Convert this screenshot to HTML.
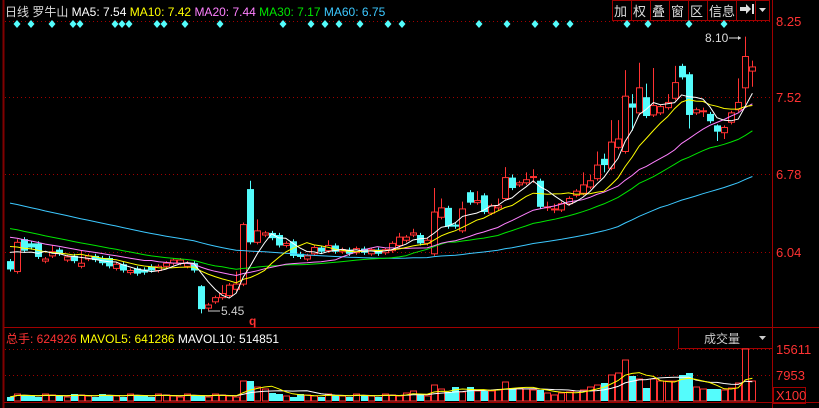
<!DOCTYPE html>
<html><head><meta charset="utf-8">
<style>
html,body{margin:0;padding:0;background:#000;width:819px;height:408px;overflow:hidden}
svg{display:block}
text{font-family:"Liberation Sans","Noto Sans CJK SC",sans-serif}
</style></head><body>
<svg id="s" width="819" height="408" xmlns="http://www.w3.org/2000/svg">
<rect width="819" height="408" fill="#000"/>
<line x1="3.5" y1="0" x2="3.5" y2="408" stroke="#800000" stroke-width="2"/>
<line x1="772.5" y1="0" x2="772.5" y2="408" stroke="#a00000"/>
<g stroke="#a00000" stroke-dasharray="1,3">
<line x1="5" y1="21.5" x2="772" y2="21.5"/>
<line x1="5" y1="97.5" x2="772" y2="97.5"/>
<line x1="5" y1="174.5" x2="772" y2="174.5"/>
<line x1="5" y1="252.5" x2="772" y2="252.5"/>
<line x1="5" y1="349.5" x2="772" y2="349.5"/>
<line x1="5" y1="375.5" x2="772" y2="375.5"/>
</g>
<line x1="4" y1="327.5" x2="819" y2="327.5" stroke="#a00000"/>
<line x1="4" y1="402.5" x2="819" y2="402.5" stroke="#a00000"/>
<g font-size="13" fill="#ff3232">
<text x="776" y="26">8.25</text><text x="776" y="102">7.52</text>
<text x="776" y="179">6.78</text><text x="776" y="257">6.04</text>
<text x="776" y="354">15611</text><text x="776" y="380">7953</text>
</g>
<rect x="773.5" y="387.5" width="32" height="16" fill="none" stroke="#a00000"/>
<text x="776" y="400" font-size="13" fill="#ff3232">X100</text>
<text x="5" y="16" font-size="12" fill="#ddd">日线  罗牛山 <tspan fill="#fff">MA5: 7.54</tspan> <tspan fill="#ffff00">MA10: 7.42</tspan> <tspan fill="#ff80ff">MA20: 7.44</tspan> <tspan fill="#00e600">MA30: 7.17</tspan> <tspan fill="#3cc8ff">MA60: 6.75</tspan></text>
<g stroke="#a00000" fill="none">
<rect x="612.5" y="0.5" width="19" height="20"/><rect x="631.5" y="0.5" width="19" height="20"/><rect x="650.5" y="0.5" width="19" height="20"/><rect x="669.5" y="0.5" width="19" height="20"/><rect x="688.5" y="0.5" width="19" height="20"/><rect x="707.5" y="0.5" width="29" height="20"/><rect x="736.5" y="0.5" width="19" height="20"/><rect x="755.5" y="0.5" width="14" height="20"/>
</g>
<g font-size="13" fill="#ddd">
<text x="614" y="16">加</text><text x="633" y="16">权</text><text x="652" y="16">叠</text><text x="671" y="16">窗</text><text x="690" y="16">区</text><text x="709" y="16">信息</text>
</g>
<path d="M740 7h6v-3l5 5l-5 5v-3h-6z M752 4h2v10h-2z" fill="#ddd"/>
<path d="M759 8h7l-3.5 4z" fill="#ddd"/>
<rect x="678.5" y="327.5" width="94" height="21" fill="none" stroke="#a00000"/>
<text x="704" y="343" font-size="12" fill="#ccc">成交量</text>
<path d="M759 336h7l-3.5 4z" fill="#ccc"/>
<text x="6" y="343" font-size="12" fill="#ff3232">总手: 624926 <tspan fill="#ffff00">MAVOL5: 641286</tspan> <tspan fill="#fff">MAVOL10: 514851</tspan></text>
<text x="705" y="42" font-size="12" fill="#ddd">8.10</text>
<path d="M729 38h12" stroke="#ddd"/><path d="M738 36l3 2l-3 2z" fill="#ddd"/>
<text x="221" y="315" font-size="12" fill="#ccc">5.45</text>
<path d="M208 311h12" stroke="#ccc"/>
<text x="249" y="325" font-size="12" fill="#ff3232" font-weight="bold">q</text>
<g id="g"></g>
</svg>
<script>
var C=[[5.95,5.87],[5.85,6.13,6.16],[6.16,6.05],[6.12,6.08],[6.12,5.99],[5.95,5.97],[6,6.04,6.1],[6.06,6.02],[5.96,5.99],[6,5.95],[5.9,5.93,6.05],[5.97,6],[6,5.96],[5.98,5.93],[5.98,5.9],[5.88,5.92],[5.92,5.86],[5.84,5.86],[5.88,5.83],[5.87,5.84],[5.9,5.86],[5.86,5.9],[5.9,5.93],[5.93,5.96],[5.93,5.96],[5.9,5.93],[5.93,5.86],[5.71,5.49,5.72,5.45],[5.5,5.53],[5.56,5.6],[5.6,5.64,5.72],[5.62,5.72],[5.68,5.73,5.85],[5.73,6.3],[6.64,6.13,6.72],[6.13,6.24,6.35],[6.2,6.22],[6.22,6.17],[6.2,6.1],[6.1,6.12],[6.14,6],[6.02,5.99],[5.97,6],[6.02,6.08],[6.08,6.04],[6.05,6.1,6.15],[6.1,6.04],[6.04,6.06],[6.06,6.02],[6.03,6.07],[6.07,6.03],[6.02,6.06],[6.06,6.02],[6.03,6.06],[6.05,6.12],[6.1,6.18,6.22],[6.15,6.18],[6.2,6.22,6.26],[6.2,6.12],[6.12,6.15],[6.02,6.42,6.65],[6.37,6.46,6.55],[6.46,6.28],[6.3,6.28],[6.24,6.45,6.52],[6.61,6.51],[6.51,6.53,6.62],[6.58,6.42],[6.41,6.48],[6.46,6.48,6.55],[6.55,6.75,6.85],[6.75,6.65,6.78],[6.68,6.7],[6.7,6.73,6.8],[6.76,6.76,6.83,6.7],[6.72,6.47],[6.47,6.47,6.52,6.43],[6.45,6.45,6.5,6.41],[6.44,6.5],[6.5,6.55],[6.58,6.62],[6.6,6.68,6.8],[6.66,6.72,6.78],[6.74,6.87,7],[6.93,6.87,6.98,6.8],[6.84,7.09,7.3],[7.04,7.12,7.3],[7,7.53,7.78],[7.46,7.42,7.55,7.2],[7.37,7.61,7.85],[7.52,7.34,7.65],[7.35,7.44,7.8],[7.37,7.43],[7.42,7.47,7.55],[7.51,7.66,7.82],[7.82,7.71],[7.74,7.35,7.76,7.22],[7.37,7.4],[7.39,7.39,7.42,7.33],[7.36,7.29],[7.25,7.19,7.26,7.1],[7.18,7.23,7.25,7.12],[7.28,7.37],[7.4,7.47,7.7],[7.61,7.91,8.1,7.45],[7.77,7.81,7.87,7.62]];
var V={33:20,34:20,35:14,36:12,37:8,38:7,56:8,57:10,60:16,61:12,62:9,63:14,64:9,65:14,66:10,67:10,68:10,69:11,70:19,71:13,72:13,73:12,74:11,75:11,76:8,77:6,78:8,79:9,80:10,81:11,82:14,83:16,84:18,85:26,86:28,87:41,88:25,89:22,90:13,91:22,92:20,93:20,94:20,95:26,96:28,97:14,98:12,99:12,100:12,101:11,102:13,103:18,104:52,105:20};
function Y(p){return 21+(8.25-p)*104.4}
function X(i){return 10+7.07*i}
var h='',vol=[];
for(var i=0;i<C.length;i++){var c=C[i],o=c[0],cl=c[1],hi=c[2]||Math.max(o,cl)+0.02,lo=c[3]||Math.min(o,cl)-0.02;
var x=Math.round(X(i)),up=cl>=o,col=up?'#ff3232':'#54fcfc';
var t=Y(Math.max(o,cl)),b=Y(Math.min(o,cl));if(b-t<1)b=t+1;
h+='<line x1="'+(x+.5)+'" y1="'+Y(hi)+'" x2="'+(x+.5)+'" y2="'+Y(lo)+'" stroke="'+col+'"/>';
if(up)h+='<rect x="'+(x-2.5)+'" y="'+t+'" width="6" height="'+(b-t)+'" fill="#000" stroke="'+col+'"/>';
else h+='<rect x="'+(x-3)+'" y="'+t+'" width="7" height="'+(b-t)+'" fill="'+col+'"/>';
var v=V[i]||(4+((i*7)%4));vol.push(v);
h+=up?'<rect x="'+(x-2.5)+'" y="'+(401-v)+'" width="6" height="'+v+'" fill="#000" stroke="#ff3232"/>':'<rect x="'+(x-3)+'" y="'+(401-v)+'" width="7" height="'+v+'" fill="#54fcfc"/>';}
var cl=[];for(var k=0;k<60;k++)cl.push(7.0-0.95*k/59);
for(i=0;i<C.length;i++)cl.push(C[i][1]);
function ma(n,col){var d='';for(var i=0;i<C.length;i++){var s=0;for(var j=0;j<n;j++)s+=cl[60+i-j];d+=(i?'L':'M')+X(i).toFixed(1)+' '+Y(s/n).toFixed(1);}return '<path d="'+d+'" fill="none" stroke="'+col+'"/>';}
h+=ma(60,'#3cc8ff')+ma(30,'#00e600')+ma(20,'#ff80ff')+ma(10,'#ffff00')+ma(5,'#ffffff');
function vma(n,col){var d='';for(var i=0;i<C.length;i++){var s=0,m=0;for(var j=0;j<n&&i-j>=0;j++){s+=vol[i-j];m++;}d+=(i?'L':'M')+X(i).toFixed(1)+' '+(401-s/m).toFixed(1);}return '<path d="'+d+'" fill="none" stroke="'+col+'"/>';}
h+=vma(10,'#ffffff')+vma(5,'#ffff00');
var D=[17,31,52,73,80,115,122,129,157,164,185,220,283,311,325,339,360,388,402,479,507,535,556,570,627,648,689,724];
D.forEach(function(x){h+='<path d="M'+x+' 20l3.5 4l-3.5 4l-3.5-4z" fill="#54fcfc"/>';});
document.getElementById('g').innerHTML=h;
</script>
</body></html>
